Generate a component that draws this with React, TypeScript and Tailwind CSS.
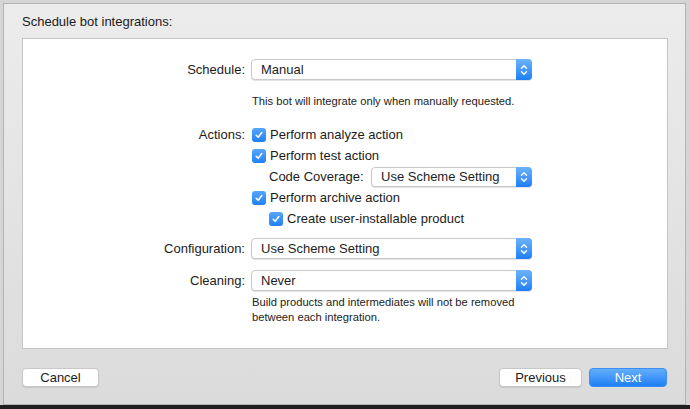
import React from "react";

const font = { fontFamily: '"Liberation Sans", Arial, Helvetica, sans-serif' };

function Stepper() {
  return (
    <div className="w-[16px] self-stretch -my-px -mr-px rounded-r-[4px] bg-gradient-to-b from-[#6cb3fb] to-[#1b7ef5] flex items-center justify-center">
      <svg width="8" height="12" viewBox="0 0 8 12" fill="none" stroke="white" strokeWidth="1.4" strokeLinecap="round" strokeLinejoin="round">
        <path d="M1.5 4.2 L4 1.7 L6.5 4.2" />
        <path d="M1.5 7.8 L4 10.3 L6.5 7.8" />
      </svg>
    </div>
  );
}

function Popup({ value, className }: { value: string; className: string }) {
  return (
    <div className={`flex items-stretch bg-white border border-[#c9c9c9] rounded-[4px] shadow-[0_1px_1px_rgba(0,0,0,0.12)] ${className}`}>
      <div className="flex-1 flex items-center pl-[9px] text-[13px] text-[#1d1d1d]">{value}</div>
      <Stepper />
    </div>
  );
}

function Check() {
  return (
    <div className="w-[14px] h-[14px] rounded-[3px] bg-gradient-to-b from-[#55a6fa] to-[#1e80f5] flex items-center justify-center shrink-0">
      <svg width="10" height="10" viewBox="0 0 10 10" fill="none" stroke="white" strokeWidth="1.6" strokeLinecap="round" strokeLinejoin="round">
        <path d="M2.2 5.3 L4.2 7.3 L7.8 2.6" />
      </svg>
    </div>
  );
}

export default function App() {
  return (
    <div className="w-[690px] h-[409px] bg-[#d5d5d5] overflow-hidden flex flex-col" style={font}>
      <div className="h-[3px] shrink-0" />
      <div className="ml-[3px] w-[683px] h-[402px] shrink-0 border border-[#b3b3b3] bg-gradient-to-b from-[#ececec] to-[#dbdbdb] flex flex-col">
        <div className="pl-[18px] pt-[10px] h-[26px] text-[13px] leading-[16px] text-[#1b1b1b]">Schedule bot integrations:</div>
        <div className="ml-[18px] mt-[8px] w-[646px] h-[311px] bg-white border border-[#c6c6c6] flex flex-col text-[13px] text-[#1b1b1b]">
          {/* Schedule */}
          <div className="mt-[20px] flex items-center h-[21px]">
            <div className="w-[222px] text-right">Schedule:</div>
            <Popup value="Manual" className="ml-[6px] w-[281px] h-[21px]" />
          </div>
          <div className="mt-[14px] ml-[229px] text-[11.2px] leading-[14px] text-[#222]">This bot will integrate only when manually requested.</div>
          {/* Actions */}
          <div className="mt-[16px] flex items-center h-[21px]">
            <div className="w-[222px] text-right">Actions:</div>
            <div className="ml-[7px] flex items-center gap-[4px]"><Check /><span>Perform analyze action</span></div>
          </div>
          <div className="flex items-center h-[21px] ml-[229px] gap-[4px]"><Check /><span>Perform test action</span></div>
          <div className="flex items-center h-[21px] ml-[246px]">
            <span className="w-[102px]">Code Coverage:</span>
            <Popup value="Use Scheme Setting" className="w-[161px] h-[20px]" />
          </div>
          <div className="flex items-center h-[21px] ml-[229px] gap-[4px]"><Check /><span>Perform archive action</span></div>
          <div className="flex items-center h-[21px] ml-[246px] gap-[4px]"><Check /><span>Create user-installable product</span></div>
          {/* Configuration */}
          <div className="mt-[9px] flex items-center h-[21px]">
            <div className="w-[222px] text-right">Configuration:</div>
            <Popup value="Use Scheme Setting" className="ml-[6px] w-[281px] h-[21px]" />
          </div>
          <div className="mt-[11px] flex items-center h-[21px]">
            <div className="w-[222px] text-right">Cleaning:</div>
            <Popup value="Never" className="ml-[6px] w-[281px] h-[21px]" />
          </div>
          <div className="mt-[4px] ml-[229px] text-[11.2px] leading-[15px] text-[#222]">
            <div>Build products and intermediates will not be removed</div>
            <div>between each integration.</div>
          </div>
        </div>
        <div className="mt-[19px] flex items-center px-[18px] text-[13px]">
          <div className="w-[77px] h-[19px] bg-white border border-[#c8c8c8] rounded-[4px] shadow-[0_1px_1px_rgba(0,0,0,0.1)] flex items-center justify-center text-[#1b1b1b]">Cancel</div>
          <div className="flex-1" />
          <div className="w-[83px] h-[19px] bg-white border border-[#c8c8c8] rounded-[4px] shadow-[0_1px_1px_rgba(0,0,0,0.1)] flex items-center justify-center text-[#1b1b1b]">Previous</div>
          <div className="ml-[7px] w-[78px] h-[19px] rounded-[4px] bg-gradient-to-b from-[#62aefb] to-[#1c7ff5] border border-[#3b8ef2] flex items-center justify-center text-white">Next</div>
        </div>
      </div>
      <div className="flex-1 bg-[#1f1f1f]" />
    </div>
  );
}
